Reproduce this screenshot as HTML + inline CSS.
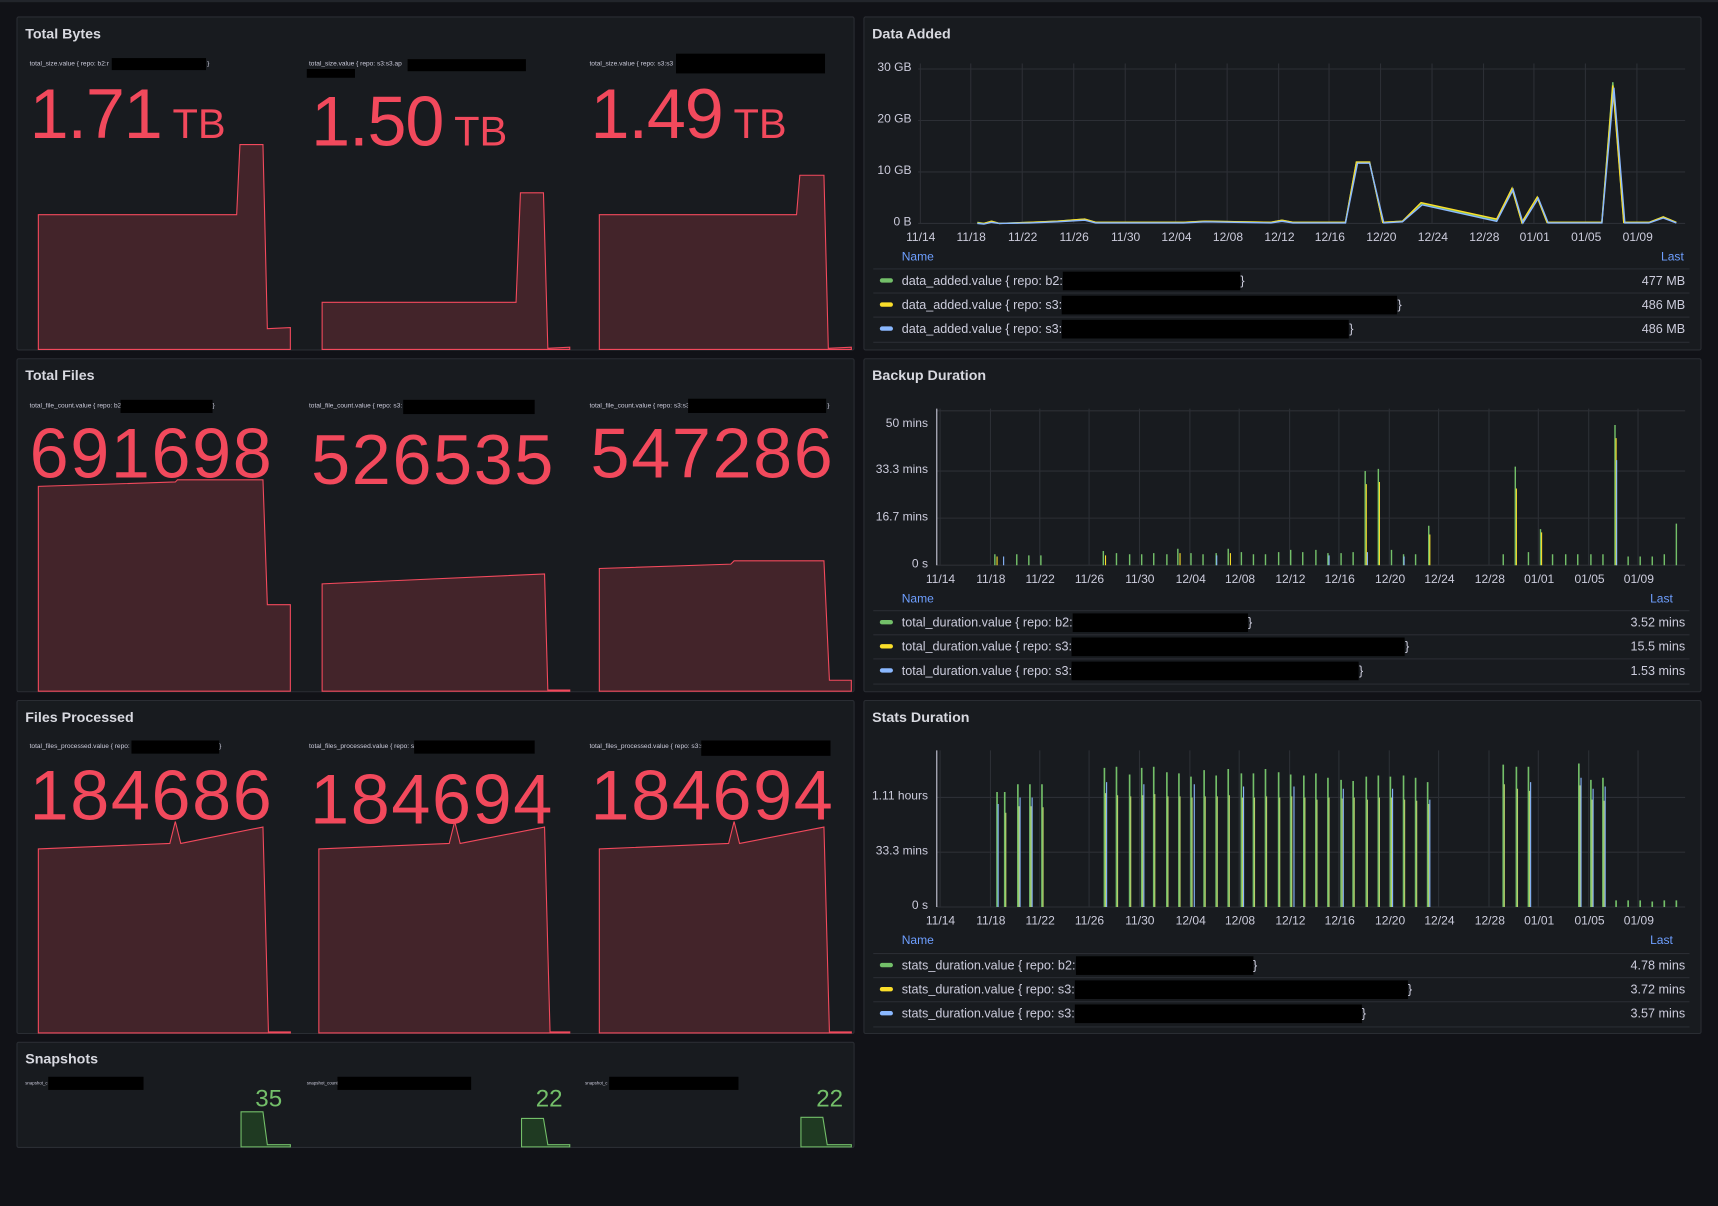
<!DOCTYPE html>
<html><head><meta charset="utf-8"><style>
html,body{margin:0;padding:0;background:#111217;overflow:hidden}
body{width:1718px;height:1206px;font-family:"Liberation Sans",sans-serif;color:#ccccdc}
#w{position:absolute;left:0;top:0;width:1568px;height:1101px;transform:scale(1.09566,1.0954);transform-origin:0 0}
.p{position:absolute;background:#181b1f;border:1px solid #2a2d33;box-sizing:border-box;border-radius:2px}
.t{position:absolute;font-size:13px;font-weight:bold;color:#d8d9e0}
.lg{position:absolute;font-size:6px;color:#ccccdc;white-space:nowrap}
.r{position:absolute;background:#000}
.big{position:absolute;color:#f2495c;font-size:64px;line-height:1;white-space:nowrap;letter-spacing:-1px}
.big span{font-size:38px;letter-spacing:0}
.big.n{letter-spacing:1.5px}
.ax{position:absolute;font-size:11px;color:#ccccdc;white-space:nowrap}
.row{position:absolute;font-size:11.5px;color:#ccccdc;white-space:nowrap;height:22px;line-height:22px;border-top:1px solid #2a2d33}
.sw{display:inline-block;width:12px;height:4px;border-radius:2px;vertical-align:middle;margin:0 8px 2px 6px}
.nm{position:absolute;font-size:11px;color:#6e9fff}
.g{position:absolute;color:#73bf69;font-size:22px}
</style></head><body><div id="w">
<div style="position:absolute;left:0;top:0;width:1568px;height:2px;background:#22252b"></div>
<div class="p" style="left:15px;top:15px;width:765px;height:305px"></div>
<div class="p" style="left:788px;top:15px;width:765px;height:305px"></div>
<div class="p" style="left:15px;top:327px;width:765px;height:305px"></div>
<div class="p" style="left:788px;top:327px;width:765px;height:305px"></div>
<div class="p" style="left:15px;top:639px;width:765px;height:305px"></div>
<div class="p" style="left:788px;top:639px;width:765px;height:305px"></div>
<div class="p" style="left:15px;top:951px;width:765px;height:97px"></div>

<div class="t" style="left:23px;top:23px">Total Bytes</div>
<div class="t" style="left:796px;top:23px">Data Added</div>
<div class="t" style="left:23px;top:335px">Total Files</div>
<div class="t" style="left:796px;top:335px">Backup Duration</div>
<div class="t" style="left:23px;top:647px">Files Processed</div>
<div class="t" style="left:796px;top:647px">Stats Duration</div>
<div class="t" style="left:23px;top:959px">Snapshots</div>

<svg style="position:absolute;left:0;top:0" width="1568" height="1101">
<g fill="#43242a" stroke="#f2495c" stroke-width="1">
<path d="M35 319V196H216L219 132H240L244 300L265 299V319Z"/>
<path d="M294 319V276H471L475 176H496L500 318L520 317V319Z"/>
<path d="M547 319V196H727L730 160H752L756 318L777 317V319Z"/>
<path d="M35 631V444L160 440L162 438H240L244 552H265V631Z"/>
<path d="M294 631V533L497 524L500 630L520 630V631Z"/>
<path d="M547 631V519L667 515L670 512H752L757 621H777V631Z"/>
<path d="M35 943V775L155 770L160 750L165 770L240 755L245 942L265 942V943Z"/>
<path d="M291 943V775L410 770L415 750L420 770L497 755L502 942L520 942V943Z"/>
<path d="M547 943V775L665 770L670 750L675 770L752 755L757 942L777 942V943Z"/>
</g>
<g fill="#1f3a22" stroke="#73bf69" stroke-width="1">
<path d="M220 1047V1015H240L244 1045H265V1047Z"/>
<path d="M476 1047V1021H496L500 1045H520V1047Z"/>
<path d="M731 1047V1020H751L755 1045H777V1047Z"/>
</g>
<g stroke="#2c2f35" stroke-width="1">
<path d="M838 63H1538M838 110H1538M838 157H1538M838 204H1538"/>
<path d="M840 58V204M886 58V204M933 58V204M980 58V204M1027 58V204M1073 58V204M1120 58V204M1167 58V204M1213 58V204M1260 58V204M1307 58V204M1354 58V204M1400 58V204M1447 58V204M1494 58V204"/>
<path d="M855 375H1538M855 430H1538M855 473H1538M855 516H1538"/>
<path d="M858 373V516M904 373V516M949 373V516M994 373V516M1040 373V516M1086 373V516M1131 373V516M1177 373V516M1222 373V516M1268 373V516M1313 373V516M1359 373V516M1404 373V516M1450 373V516M1495 373V516"/>
<path d="M855 728H1538M855 778H1538M855 828H1538"/>
<path d="M858 685V828M904 685V828M949 685V828M994 685V828M1040 685V828M1086 685V828M1131 685V828M1177 685V828M1222 685V828M1268 685V828M1313 685V828M1359 685V828M1404 685V828M1450 685V828M1495 685V828"/>
</g>
<path d="M855 373V516M855 685V828" stroke="#ccccdc" stroke-width="1"/>
<g fill="none" stroke-width="1.3">
<path stroke="#73bf69" d="M892 203L898 204L905 202L912 204L940 203L965 202L990 200L1000 203L1080 203L1100 202L1160 203L1170 201L1180 203L1228 203L1238 148L1250 148L1262 203L1280 202L1297 186L1366 201L1380 172L1389 203L1403 180L1412 203L1462 203L1472 75L1482 203L1505 203L1518 198L1530 203"/>
<path stroke="#fade2a" d="M892 203.5L898 204L905 202L912 204L940 203L965 202L990 200L1000 203L1080 203L1100 202L1160 203L1170 201L1180 203L1228 203L1238 148L1250 148L1262 203L1280 202L1297 185L1366 200L1380 172L1389 203L1403 180L1412 203L1462 203L1472 78L1482 203L1505 203L1518 198L1530 203"/>
<path stroke="#8ab8ff" d="M892 204L898 204.5L905 203L912 204L940 203.5L965 202.5L990 201L1000 203.5L1080 203.5L1100 202.5L1160 203.5L1170 202L1180 203.5L1228 203.5L1239 149L1250 149L1263 203.5L1280 202.5L1298 187L1366 202L1381 173L1390 203.5L1404 181L1413 203.5L1462 203.5L1473 80L1483 203.5L1505 203.5L1518 199L1530 203.5"/>
</g>
<g stroke-width="1.3">
<path stroke="#73bf69" d="M908 516V506M928 516V506M939 516V507M950 516V507M1007 516V503M1019 516V505M1031 516V506M1042 516V506M1053 516V505M1065 516V506M1075 516V501M1087 516V505M1098 516V506M1110 516V505M1121 516V501M1133 516V504M1144 516V506M1155 516V506M1167 516V504M1178 516V502M1189 516V504M1201 516V502M1212 516V505M1224 516V505M1235 516V504M1246 516V430M1258 516V428M1270 516V502M1281 516V506M1292 516V506M1304 516V480M1372 516V506M1383 516V426M1395 516V504M1406 516V483M1417 516V506M1429 516V506M1440 516V506M1452 516V506M1463 516V506M1474 516V388M1486 516V508M1497 516V508M1508 516V508M1519 516V506M1530 516V478"/>
<path stroke="#fade2a" stroke-width="1" d="M1247 516V442M1259 516V440M1305 516V488M1384 516V446M1407 516V486M1475 516V400M910 516V508M1009 516V507M1077 516V505M1123 516V505"/>
<path stroke="#8ab8ff" stroke-width="1" d="M916 516V508M1110.5 516V507M1213 516V507M1281.5 516V508M1248 516V504M1475.5 516V420"/>
</g>
<g stroke-width="1.5">
<path stroke="#73bf69" d="M910 828V723M917 828V723M929 828V716M940 828V716M951 828V716M1008 828V701M1019 828V700M1031 828V707M1042 828V701M1053 828V700M1065 828V705M1076 828V706M1087 828V709M1099 828V703M1110 828V708M1121 828V702M1133 828V706M1144 828V706M1155 828V702M1167 828V705M1178 828V707M1190 828V708M1201 828V706M1212 828V710M1224 828V712M1235 828V713M1247 828V709M1258 828V708M1269 828V709M1281 828V708M1292 828V710M1303 828V714M1372 828V698M1384 828V700M1395 828V700M1441 828V697M1452 828V712M1463 828V710M1475 828V822M1486 828V822M1497 828V822M1508 828V823M1519 828V822M1530 828V822"/>
<path stroke="#b8d06a" stroke-width="1" d="M918 828V742M930 828V736M941 828V736M952 828V737M1009 828V724M1020 828V726M1032 828V727M1043 828V726M1054 828V725M1066 828V727M1077 828V727M1088 828V728M1100 828V727M1111 828V727M1122 828V726M1134 828V728M1145 828V728M1156 828V727M1168 828V728M1179 828V727M1191 828V728M1202 828V730M1213 828V728M1225 828V729M1236 828V728M1248 828V730M1259 828V728M1270 828V728M1282 828V730M1293 828V731M1304 828V734M1373 828V716M1385 828V720M1396 828V722M1442 828V717M1453 828V730M1464 828V731"/>
<path stroke="#8ab8ff" stroke-width="1" d="M911 828V734M931 828V728M942 828V728M1010 828V714M1044 828V716M1090 828V716M1135 828V718M1181 828V718M1226 828V720M1271 828V720M1305 828V730M1397 828V714M1443 828V710M1454 828V720M1465 828V718"/>
</g>
</svg>

<div class="lg" style="left:27px;top:56px">total_size.value { repo: b2:r</div><div class="r" style="left:102px;top:53px;width:86px;height:11px"></div><div class="lg" style="left:189px;top:56px">}</div>
<div class="lg" style="left:282px;top:56px">total_size.value { repo: s3:s3.ap</div><div class="r" style="left:372px;top:54px;width:108px;height:11px"></div><div class="r" style="left:280px;top:63px;width:44px;height:8px"></div>
<div class="lg" style="left:538px;top:56px">total_size.value { repo: s3:s3</div><div class="r" style="left:617px;top:49px;width:136px;height:18px"></div>
<div class="big" style="left:27px;top:72px">1.71<span> TB</span></div>
<div class="big" style="left:284px;top:79px">1.50<span> TB</span></div>
<div class="big" style="left:539px;top:72px">1.49<span> TB</span></div>

<div class="lg" style="left:27px;top:368px">total_file_count.value { repo: b2</div><div class="r" style="left:110px;top:365px;width:84px;height:12px"></div><div class="lg" style="left:194px;top:368px">}</div>
<div class="lg" style="left:282px;top:368px">total_file_count.value { repo: s3:</div><div class="r" style="left:368px;top:365px;width:120px;height:13px"></div>
<div class="lg" style="left:538px;top:368px">total_file_count.value { repo: s3:s3</div><div class="r" style="left:628px;top:364px;width:126px;height:13px"></div><div class="lg" style="left:755px;top:368px">}</div>
<div class="big n" style="left:27px;top:382px">691698</div>
<div class="big n" style="left:284px;top:388px">526535</div>
<div class="big n" style="left:539px;top:382px">547286</div>

<div class="lg" style="left:27px;top:679px">total_files_processed.value { repo: b2</div><div class="r" style="left:120px;top:676px;width:80px;height:12px"></div><div class="lg" style="left:200px;top:679px">}</div>
<div class="lg" style="left:282px;top:679px">total_files_processed.value { repo: s3:</div><div class="r" style="left:378px;top:676px;width:110px;height:12px"></div>
<div class="lg" style="left:538px;top:679px">total_files_processed.value { repo: s3:s3.</div><div class="r" style="left:640px;top:676px;width:118px;height:14px"></div>
<div class="big n" style="left:27px;top:694px">184686</div>
<div class="big n" style="left:283px;top:698px">184694</div>
<div class="big n" style="left:539px;top:694px">184694</div>

<div class="lg" style="left:23px;top:986px;font-size:4px">snapshot_c</div><div class="r" style="left:44px;top:983px;width:87px;height:12px"></div>
<div class="lg" style="left:280px;top:986px;font-size:4px">snapshot_count</div><div class="r" style="left:308px;top:983px;width:122px;height:12px"></div>
<div class="lg" style="left:534px;top:986px;font-size:4px">snapshot_c</div><div class="r" style="left:556px;top:983px;width:118px;height:12px"></div>
<div class="g" style="left:233px;top:990px">35</div>
<div class="g" style="left:489px;top:990px">22</div>
<div class="g" style="left:745px;top:990px">22</div>

<div class="ax" style="right:736px;top:56px">30 GB</div>
<div class="ax" style="right:736px;top:103px">20 GB</div>
<div class="ax" style="right:736px;top:150px">10 GB</div>
<div class="ax" style="right:736px;top:197px">0 B</div>
<div class="ax" style="left:827px;top:211px">11/14</div>
<div class="ax" style="left:873px;top:211px">11/18</div>
<div class="ax" style="left:920px;top:211px">11/22</div>
<div class="ax" style="left:967px;top:211px">11/26</div>
<div class="ax" style="left:1014px;top:211px">11/30</div>
<div class="ax" style="left:1060px;top:211px">12/04</div>
<div class="ax" style="left:1107px;top:211px">12/08</div>
<div class="ax" style="left:1154px;top:211px">12/12</div>
<div class="ax" style="left:1200px;top:211px">12/16</div>
<div class="ax" style="left:1247px;top:211px">12/20</div>
<div class="ax" style="left:1294px;top:211px">12/24</div>
<div class="ax" style="left:1341px;top:211px">12/28</div>
<div class="ax" style="left:1387px;top:211px">01/01</div>
<div class="ax" style="left:1434px;top:211px">01/05</div>
<div class="ax" style="left:1481px;top:211px">01/09</div>
<div class="nm" style="left:823px;top:229px">Name</div><div class="nm" style="left:1516px;top:229px">Last</div>
<div class="row" style="left:797px;top:245px;width:745px"><span class="sw" style="background:#73bf69"></span>data_added.value { repo: b2:<span style="display:inline-block;width:162px;height:17px;background:#000;vertical-align:middle"></span>}<span style="position:absolute;right:4px">477 MB</span></div>
<div class="row" style="left:797px;top:267px;width:745px"><span class="sw" style="background:#fade2a"></span>data_added.value { repo: s3:<span style="display:inline-block;width:306px;height:17px;background:#000;vertical-align:middle"></span>}<span style="position:absolute;right:4px">486 MB</span></div>
<div class="row" style="left:797px;top:289px;width:745px;border-bottom:1px solid #2a2d33"><span class="sw" style="background:#8ab8ff"></span>data_added.value { repo: s3:<span style="display:inline-block;width:262px;height:17px;background:#000;vertical-align:middle"></span>}<span style="position:absolute;right:4px">486 MB</span></div>

<div class="ax" style="right:721px;top:381px">50 mins</div>
<div class="ax" style="right:721px;top:423px">33.3 mins</div>
<div class="ax" style="right:721px;top:466px">16.7 mins</div>
<div class="ax" style="right:721px;top:509px">0 s</div>
<div class="ax" style="left:845px;top:523px">11/14</div>
<div class="ax" style="left:891px;top:523px">11/18</div>
<div class="ax" style="left:936px;top:523px">11/22</div>
<div class="ax" style="left:981px;top:523px">11/26</div>
<div class="ax" style="left:1027px;top:523px">11/30</div>
<div class="ax" style="left:1073px;top:523px">12/04</div>
<div class="ax" style="left:1118px;top:523px">12/08</div>
<div class="ax" style="left:1164px;top:523px">12/12</div>
<div class="ax" style="left:1209px;top:523px">12/16</div>
<div class="ax" style="left:1255px;top:523px">12/20</div>
<div class="ax" style="left:1300px;top:523px">12/24</div>
<div class="ax" style="left:1346px;top:523px">12/28</div>
<div class="ax" style="left:1391px;top:523px">01/01</div>
<div class="ax" style="left:1437px;top:523px">01/05</div>
<div class="ax" style="left:1482px;top:523px">01/09</div>
<div class="nm" style="left:823px;top:541px">Name</div><div class="nm" style="left:1506px;top:541px">Last</div>
<div class="row" style="left:797px;top:557px;width:745px"><span class="sw" style="background:#73bf69"></span>total_duration.value { repo: b2:<span style="display:inline-block;width:160px;height:17px;background:#000;vertical-align:middle"></span>}<span style="position:absolute;right:4px">3.52 mins</span></div>
<div class="row" style="left:797px;top:579px;width:745px"><span class="sw" style="background:#fade2a"></span>total_duration.value { repo: s3:<span style="display:inline-block;width:304px;height:17px;background:#000;vertical-align:middle"></span>}<span style="position:absolute;right:4px">15.5 mins</span></div>
<div class="row" style="left:797px;top:601px;width:745px;border-bottom:1px solid #2a2d33"><span class="sw" style="background:#8ab8ff"></span>total_duration.value { repo: s3:<span style="display:inline-block;width:262px;height:17px;background:#000;vertical-align:middle"></span>}<span style="position:absolute;right:4px">1.53 mins</span></div>

<div class="ax" style="right:721px;top:721px">1.11 hours</div>
<div class="ax" style="right:721px;top:771px">33.3 mins</div>
<div class="ax" style="right:721px;top:821px">0 s</div>
<div class="ax" style="left:845px;top:835px">11/14</div>
<div class="ax" style="left:891px;top:835px">11/18</div>
<div class="ax" style="left:936px;top:835px">11/22</div>
<div class="ax" style="left:981px;top:835px">11/26</div>
<div class="ax" style="left:1027px;top:835px">11/30</div>
<div class="ax" style="left:1073px;top:835px">12/04</div>
<div class="ax" style="left:1118px;top:835px">12/08</div>
<div class="ax" style="left:1164px;top:835px">12/12</div>
<div class="ax" style="left:1209px;top:835px">12/16</div>
<div class="ax" style="left:1255px;top:835px">12/20</div>
<div class="ax" style="left:1300px;top:835px">12/24</div>
<div class="ax" style="left:1346px;top:835px">12/28</div>
<div class="ax" style="left:1391px;top:835px">01/01</div>
<div class="ax" style="left:1437px;top:835px">01/05</div>
<div class="ax" style="left:1482px;top:835px">01/09</div>
<div class="nm" style="left:823px;top:853px">Name</div><div class="nm" style="left:1506px;top:853px">Last</div>
<div class="row" style="left:797px;top:870px;width:745px"><span class="sw" style="background:#73bf69"></span>stats_duration.value { repo: b2:<span style="display:inline-block;width:162px;height:17px;background:#000;vertical-align:middle"></span>}<span style="position:absolute;right:4px">4.78 mins</span></div>
<div class="row" style="left:797px;top:892px;width:745px"><span class="sw" style="background:#fade2a"></span>stats_duration.value { repo: s3:<span style="display:inline-block;width:304px;height:17px;background:#000;vertical-align:middle"></span>}<span style="position:absolute;right:4px">3.72 mins</span></div>
<div class="row" style="left:797px;top:914px;width:745px;border-bottom:1px solid #2a2d33"><span class="sw" style="background:#8ab8ff"></span>stats_duration.value { repo: s3:<span style="display:inline-block;width:262px;height:17px;background:#000;vertical-align:middle"></span>}<span style="position:absolute;right:4px">3.57 mins</span></div>
</div></body></html>
